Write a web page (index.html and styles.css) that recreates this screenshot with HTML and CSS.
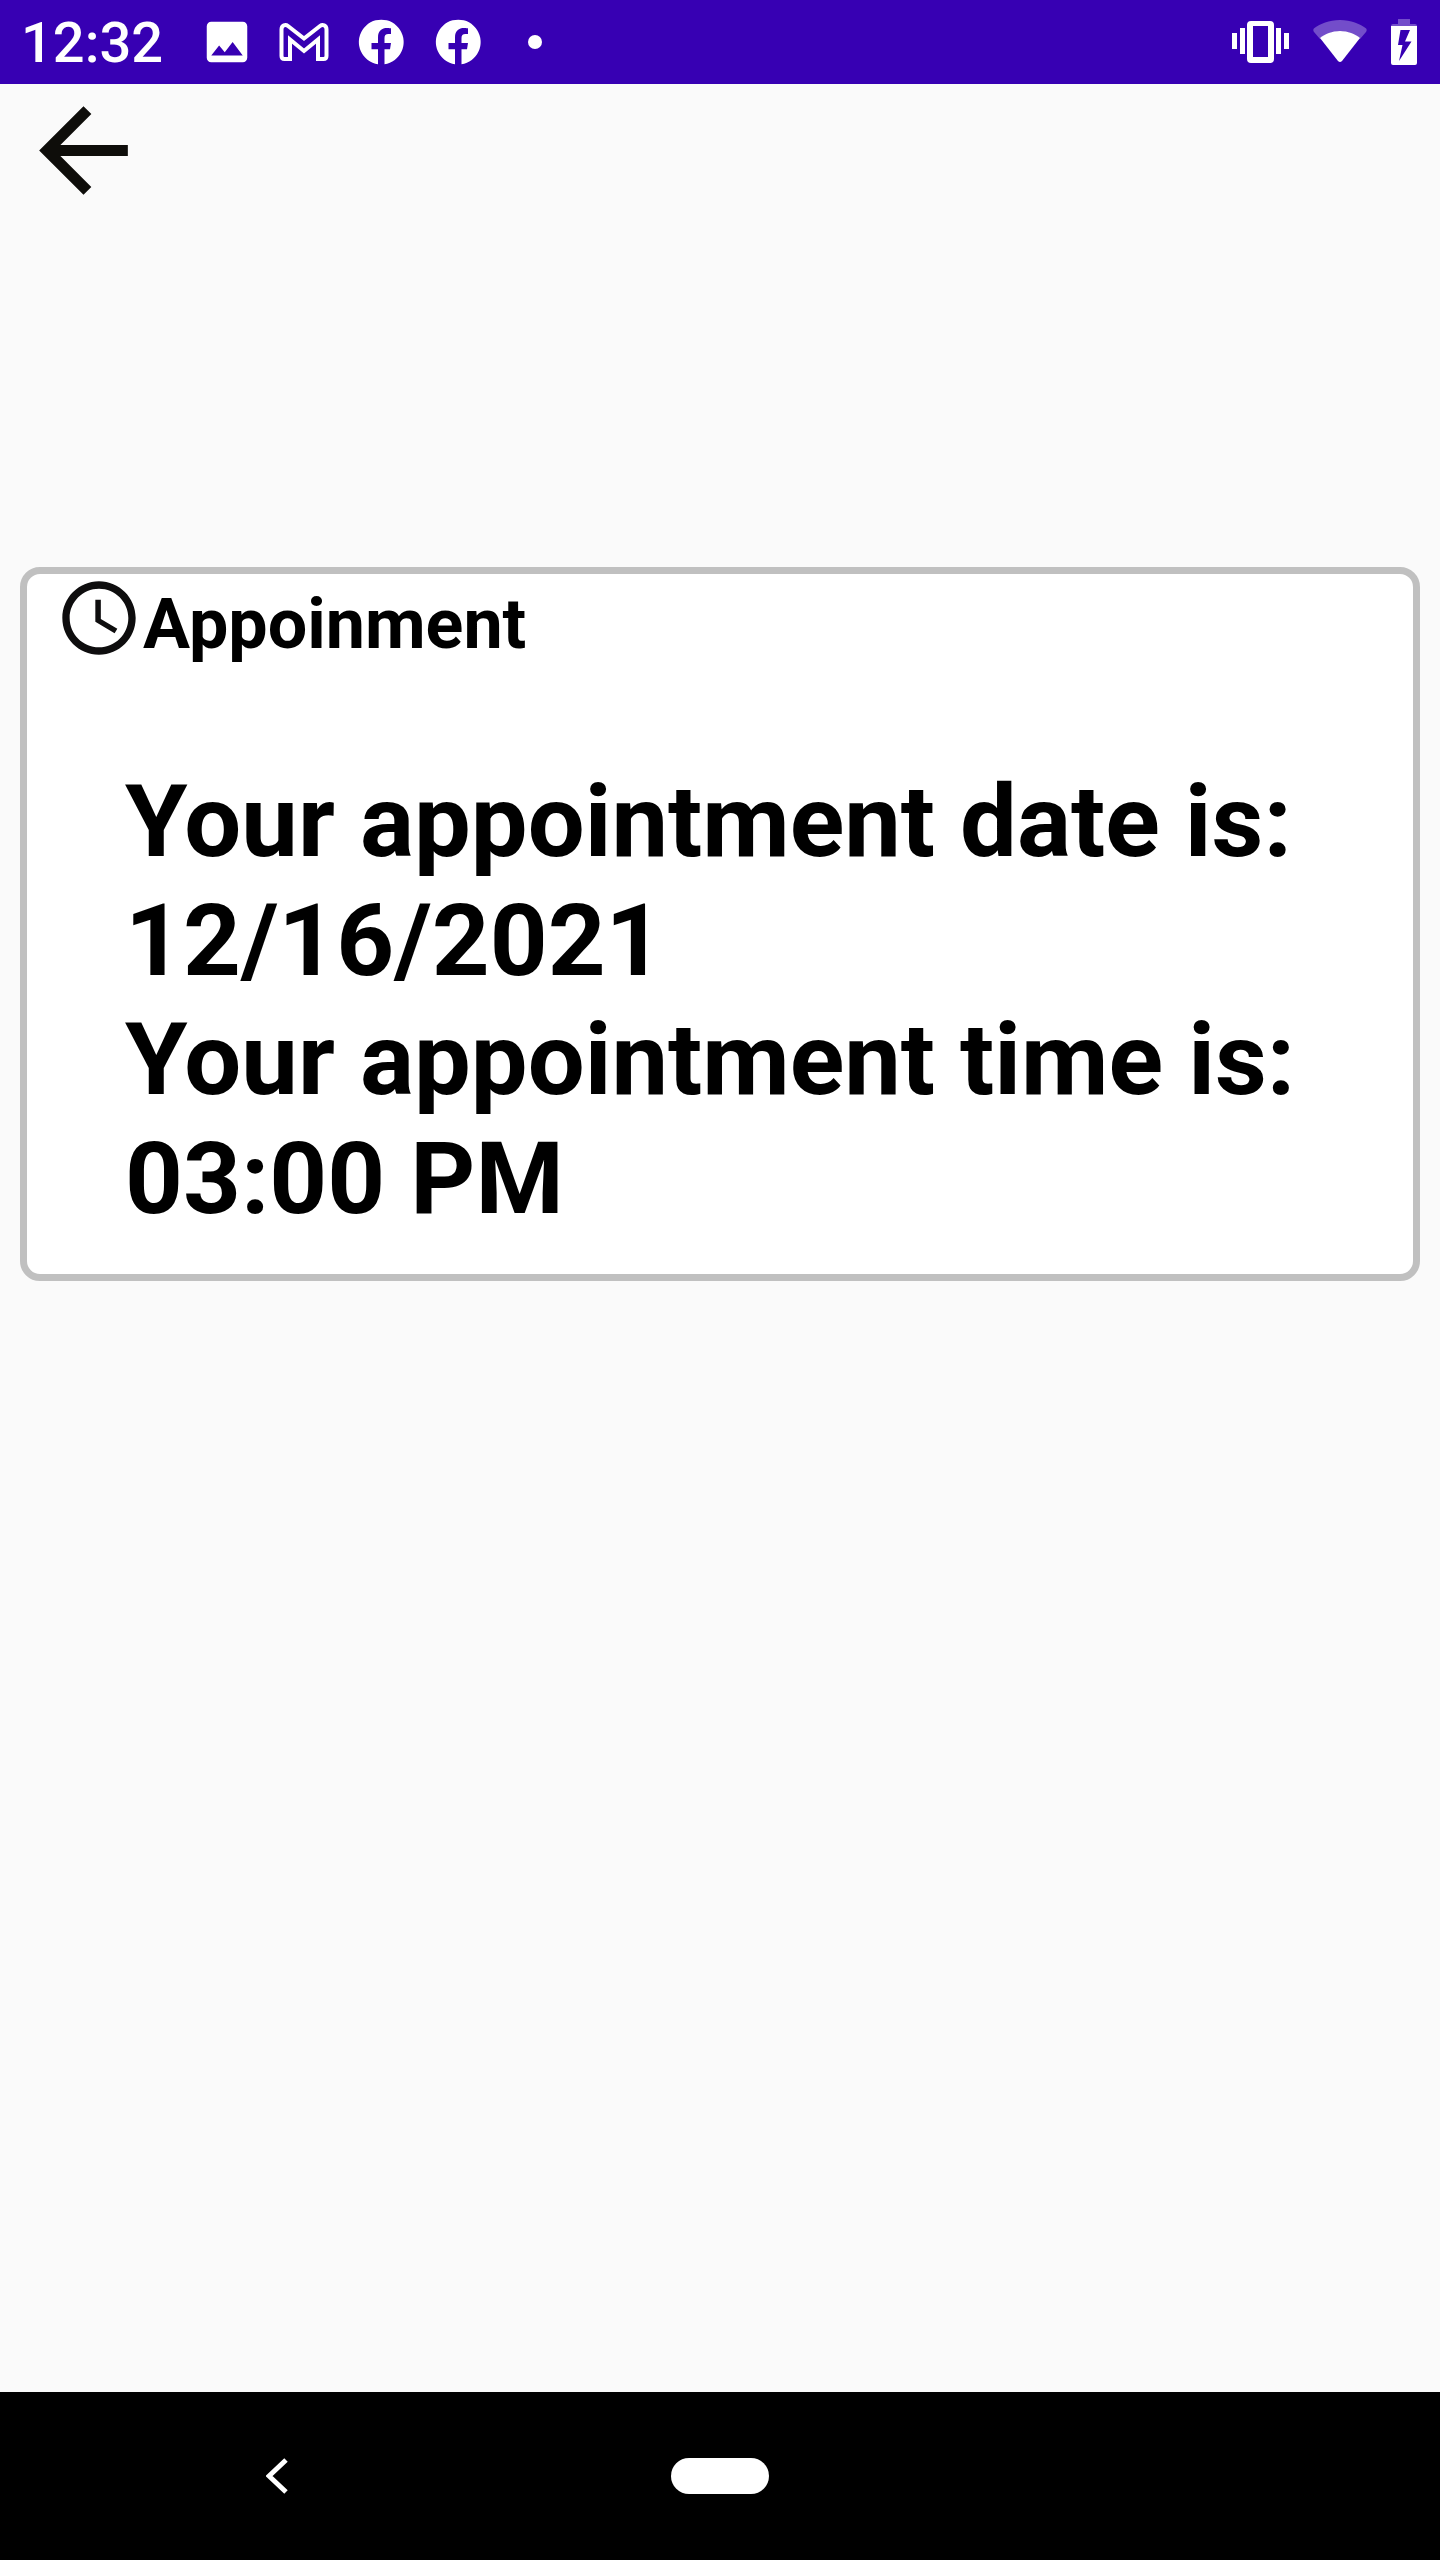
FILE: index.html
```html
<!DOCTYPE html>
<html lang="en">
<head>
<meta charset="utf-8">
<meta name="viewport" content="width=device-width, initial-scale=1">
<title>Appointment</title>
<link rel="stylesheet" href="styles.css">
</head>
<body>
<header class="status-bar">
  <time class="clock">12:32</time>
  <div class="notifications">
    <svg class="notification" viewBox="0 0 24 24" aria-hidden="true"><path d="M21 19V5c0-1.100-.9-2-2-2H5c-1.100 0-2 .9-2 2v14c0 1.100.9 2 2 2h14c1.100 0 2-.9 2-2zM8.500 13.500l2.500 3.010L14.500 12l4.500 6H5l3.500-4.500z"/></svg>
    <svg class="notification" viewBox="0 0 54 54" aria-hidden="true"><path class="outline" d="M7.500 44H13V24.500L27 36 41 24.500V44h5.500q3 0 3-3V14.500c0-4.500-4-5.500-6.500-3.500L27 23.500 11 11c-2.500-2-6.500-1-6.500 3.500V41q0 3 3 3z"/></svg>
    <svg class="notification" viewBox="0 0 54 54" aria-hidden="true"><path d="M24 49.200V34.300h-6.500V28H24v-5.500c0-7 4-9.500 9-9.500 2 0 4 .3 4 .3v5.700h-2.500c-3 0-4 1.500-4 4V28h6.500l-1 6.300h-5.500v14.900a22.400 22.400 0 1 0-6.500 0z"/></svg>
    <svg class="notification" viewBox="0 0 54 54" aria-hidden="true"><path d="M24 49.200V34.300h-6.500V28H24v-5.500c0-7 4-9.500 9-9.500 2 0 4 .3 4 .3v5.700h-2.500c-3 0-4 1.500-4 4V28h6.500l-1 6.300h-5.500v14.900a22.400 22.400 0 1 0-6.500 0z"/></svg>
    <svg class="notification" viewBox="0 0 54 54" aria-hidden="true"><circle cx="27" cy="27" r="7"/></svg>
  </div>
  <div class="system-icons">
    <svg class="vibrate" viewBox="0 0 57 46" aria-hidden="true"><path d="M0 14h5v16H0zM8 9h5v26H8zM44 9h5v26h-5zM52 14h5v16h-5z"/><path fill-rule="evenodd" d="M19 2h19q4 0 4 4v34q0 4-4 4H19q-4 0-4-4V6q0-4 4-4zm2 5v31h15V7z"/></svg>
    <svg class="wifi" viewBox="0 0 54 46" aria-hidden="true"><path class="faint" d="M27 1C16 1 7 5 1.500 9 0 10 0 11.500 1 13l6 7c11-10 29-10 40 0l6-7c1-1.500 1-3-.5-4C47 5 38 1 27 1z"/><path d="M27 12c-8 0-15 3-20 7l18 23q2 2 4 0l18-23c-5-4-12-7-20-7z"/></svg>
    <svg class="battery" viewBox="0 0 26 46" aria-hidden="true"><path class="faint" d="M7 0h12v5h5q2 0 2 2H0q0-2 2-2h5z"/><path fill-rule="evenodd" d="M0 7h26v37q0 2-2 2H2q-2 0-2-2zM9.500 11L7 26h4.500L8 42l12.500-19.500H14L19 11z"/></svg>
  </div>
</header>
<main class="screen">
  <button class="back" type="button" aria-label="Back">
    <svg class="back-icon" viewBox="0 0 24 24" aria-hidden="true"><path d="M20 11H7.830l5.590-5.590L12 4l-8 8 8 8 1.410-1.410L7.830 13H20v-2z"/></svg>
  </button>
  <section class="card">
    <h1 class="card-title">
      <svg class="card-icon" viewBox="0 0 24 24" aria-hidden="true"><path d="M11.990 2C6.470 2 2 6.480 2 12s4.470 10 9.990 10C17.520 22 22 17.520 22 12S17.520 2 11.990 2zM12 20c-4.420 0-8-3.580-8-8s3.580-8 8-8 8 3.580 8 8-3.580 8-8 8zm.5-13H11v6l5.250 3.150.75-1.230-4.500-2.670V7z"/></svg>
      <span class="card-label">Appoinment</span>
    </h1>
    <p class="details">Your appointment date is:<br>12/16/2021<br>Your appointment time is:<br>03:00 PM</p>
  </section>
</main>
<nav class="nav-bar" aria-label="System navigation">
  <button class="nav-button" type="button" aria-label="System back"><svg class="chevron" viewBox="0 0 22 36" aria-hidden="true"><path d="M20 2L3 18l17 16"/></svg></button>
  <button class="nav-button" type="button" aria-label="Home"><span class="home-pill"></span></button>
</nav>
</body>
</html>
```
FILE: styles.css
```css
* {
  box-sizing: border-box;
}

body {
  margin: 0;
  min-height: 100vh;
  display: flex;
  flex-direction: column;
  background: #fafafa;
  color: #000;
  font-family: Roboto, sans-serif;
}

svg {
  display: block;
  flex: none;
}

button {
  border: 0;
  padding: 0;
  background: none;
}

.status-bar {
  height: 84px;
  padding: 0 23px 0 21px;
  display: flex;
  align-items: center;
  background: #3700b3;
  color: #fff;
  fill: #fff;
}

.clock {
  width: 179px;
  padding-top: 2px;
  font-size: 56px;
  line-height: 66px;
  font-weight: 500;
}

.notifications {
  display: flex;
  gap: 23px;
}

.notification {
  width: 54px;
  height: 54px;
}

.outline {
  fill: none;
  stroke: #fff;
  stroke-width: 4;
}

.system-icons {
  margin-left: auto;
  display: flex;
  gap: 24px;
}

.vibrate {
  width: 57px;
  height: 46px;
}

.wifi {
  width: 54px;
  height: 46px;
}

.battery {
  width: 26px;
  height: 46px;
}

.faint {
  fill-opacity: 0.3;
}

.screen {
  flex: 1;
  padding: 0 20px;
}

.back {
  display: block;
  margin-left: -3px;
}

.back-icon {
  width: 133px;
  height: 133px;
  fill: #0e0d0a;
}

.card {
  margin-top: 350px;
  padding-bottom: 36px;
  border: 7px solid #c0c0c0;
  border-radius: 20px;
  background: #fff;
}

.card-title {
  margin: 0;
  padding-left: 28px;
  display: flex;
  align-items: flex-end;
  font-size: 70px;
  line-height: 76px;
  font-weight: 700;
}

.card-icon {
  width: 88px;
  height: 88px;
  fill: #0e0d0e;
}

.details {
  margin: 0;
  padding: 100px 98px 0;
  font-size: 101px;
  line-height: 119px;
  font-weight: 700;
}

.nav-bar {
  height: 168px;
  display: grid;
  grid-template-columns: 5fr 3fr 5fr;
  background: #000;
}

.nav-button {
  display: flex;
  align-items: center;
  justify-content: center;
}

.chevron {
  width: 22px;
  height: 36px;
  fill: none;
  stroke: #fff;
  stroke-width: 5;
}

.home-pill {
  width: 98px;
  height: 36px;
  border-radius: 18px;
  background: #fff;
}
```
